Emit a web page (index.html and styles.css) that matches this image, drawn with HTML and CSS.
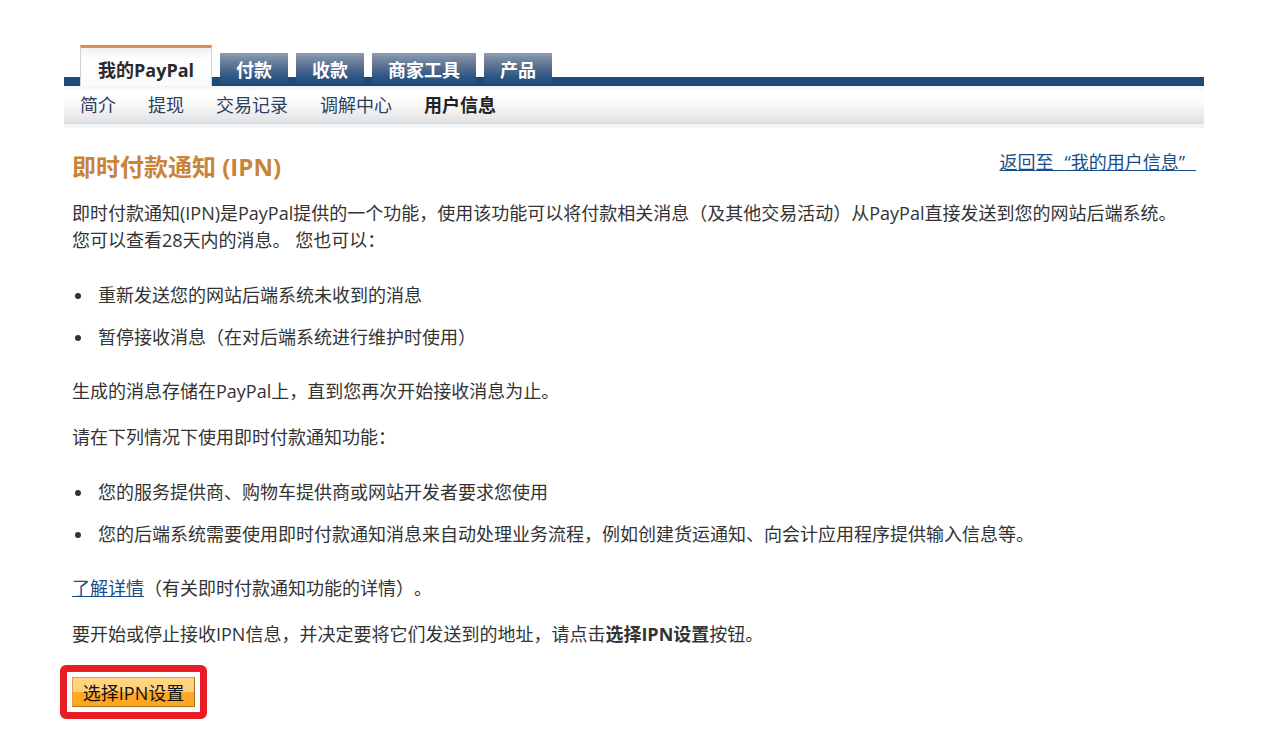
FILE: index.html
```html
<!DOCTYPE html>
<html lang="zh-CN">
<head>
<meta charset="utf-8">
<title>即时付款通知 (IPN)</title>
<link rel="stylesheet" href="styles.css">
</head>
<body>
<div class="page">
  <div class="tabs">
    <a class="tab tab-active">我的PayPal</a>
    <a class="tab">付款</a>
    <a class="tab">收款</a>
    <a class="tab">商家工具</a>
    <a class="tab">产品</a>
  </div>
  <div class="subnav">
    <a class="sub">简介</a>
    <a class="sub">提现</a>
    <a class="sub">交易记录</a>
    <a class="sub">调解中心</a>
    <a class="sub sub-active">用户信息</a>
  </div>
  <div class="content">
    <div class="title-row">
      <h1 class="title">即时付款通知 (IPN)</h1>
      <a class="back-link" href="#">返回<span class="gap">至</span>“我的用户信息<span class="gap">”</span></a>
    </div>
    <p>即时付款通知(IPN)是PayPal提供的一个功能，使用该功能可以将付款相关消息（及其他交易活动）从PayPal直接发送到您的网站后端系统。<br>您可以查看28天内的消息。 您也可以：</p>
    <ul>
      <li>重新发送您的网站后端系统未收到的消息</li>
      <li>暂停接收消息（在对后端系统进行维护时使用）</li>
    </ul>
    <p>生成的消息存储在PayPal上，直到您再次开始接收消息为止。</p>
    <p>请在下列情况下使用即时付款通知功能：</p>
    <ul>
      <li>您的服务提供商、购物车提供商或网站开发者要求您使用</li>
      <li>您的后端系统需要使用即时付款通知消息来自动处理业务流程，例如创建货运通知、向会计应用程序提供输入信息等。</li>
    </ul>
    <p><a class="inline-link" href="#">了解详情</a>（有关即时付款通知功能的详情）。</p>
    <p>要开始或停止接收IPN信息，并决定要将它们发送到的地址，请点击<b>选择IPN设置</b>按钮。</p>
    <div class="highlight">
      <button class="btn" type="button">选择IPN设置</button>
    </div>
  </div>
</div>
</body>
</html>
```
FILE: styles.css
```css
html, body {
  margin: 0;
  padding: 0;
  background: #ffffff;
}
body {
  font-family: "Open Sans", "Noto Sans CJK SC", sans-serif;
  color: #333333;
  font-size: 18px;
  text-spacing-trim: space-all;
}
.page {
  width: 1140px;
  margin-left: 64px;
  padding-top: 45px;
}
.tabs {
  display: flex;
  align-items: flex-end;
  gap: 8px;
  height: 41px;
  padding-left: 16px;
  background: linear-gradient(to bottom, transparent 0, transparent 32px, #1f4a78 32px, #1f4a78 100%);
}
.tab {
  display: flex;
  align-items: center;
  height: 33px;
  padding: 1px 16px 0;
  font-size: 18px;
  font-weight: bold;
  color: #ffffff;
  background: linear-gradient(to bottom, #8d9db2 0%, #5a7191 40%, #2a5482 75%, #1f4a78 100%);
  text-decoration: none;
  line-height: 1;
  box-sizing: border-box;
}
.tab-active {
  height: 41px;
  color: #2a2a2a;
  background: linear-gradient(to bottom, #f0f0f0 0%, #ffffff 30%, #fbfbfc 100%);
  border-top: 3px solid #e08a55;
  border-left: 1px solid #d6d0d0;
  border-right: 1px solid #d6d0d0;
  padding: 5px 17px 0;
}
.subnav {
  display: flex;
  align-items: center;
  gap: 32px;
  height: 36px;
  padding-left: 16px;
  background: linear-gradient(to bottom, #f3f3f3 0%, #ffffff 18%, #fbfbfb 45%, #eeeeee 75%, #e2e2e2 100%);
  border-bottom: 2px solid #d6e0ea;
  box-shadow: 0 4px 0 #f2f4f6;
}
.sub {
  font-size: 18px;
  color: #2d3f5c;
  text-decoration: none;
}
.sub-active {
  font-weight: bold;
  color: #222222;
}
.content {
  padding: 28px 8px 0 8px;
}
.title-row {
  display: flex;
  justify-content: space-between;
  align-items: flex-start;
}
.title {
  margin: 0;
  font-size: 24px;
  font-weight: bold;
  color: #c9843a;
  line-height: 30px;
}
.back-link {
  font-size: 18px;
  color: #1a4c8b;
  text-decoration: underline;
  line-height: 20px;
}
.gap {
  letter-spacing: 11px;
}
p {
  margin: 0 0 19px;
  line-height: 27px;
}
.content > p:first-of-type {
  margin-top: 18px;
}
ul {
  margin: 28px 0 27px;
  padding-left: 3px;
  list-style: none;
}
li {
  display: flex;
  align-items: center;
  line-height: 27px;
}
li::before {
  content: "";
  flex: none;
  width: 6px;
  height: 6px;
  margin-right: 17px;
  border-radius: 50%;
  background: #333333;
}
li + li {
  margin-top: 15px;
}
.inline-link {
  color: #1a4c8b;
  text-decoration: underline;
}
.highlight {
  display: inline-block;
  margin-left: -12px;
  margin-top: -2px;
  padding: 5px;
  border: 7px solid #e81c24;
  border-radius: 6px;
}
.btn {
  display: block;
  width: 123px;
  height: 30px;
  padding: 0;
  font-family: "Open Sans", "Noto Sans CJK SC", sans-serif;
  font-size: 18px;
  color: #111111;
  background: linear-gradient(to bottom, #ffd585 0%, #ffcf7a 48%, #ffa928 52%, #ffa51c 100%);
  border: 1px solid #d9a24a;
  border-right-color: #a87522;
  border-bottom-color: #a87522;
}
```
